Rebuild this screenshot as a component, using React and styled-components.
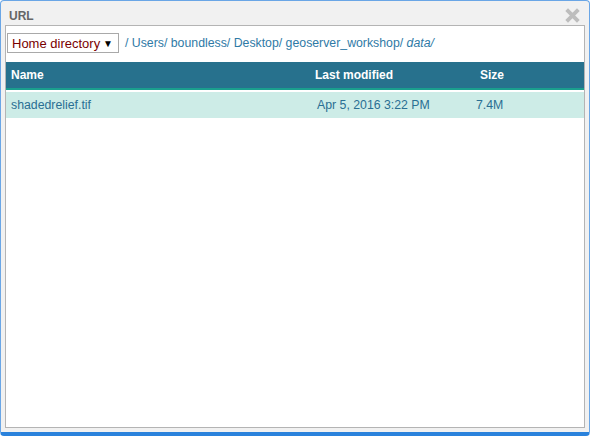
import React from "react";
import styled, { createGlobalStyle } from "styled-components";

const Global = createGlobalStyle`
  html, body { margin: 0; padding: 0; background: #ffffff; }
  body { font-family: "Liberation Sans", Arial, sans-serif; }
`;

const Window = styled.div`
  box-sizing: border-box;
  width: 590px;
  height: 436px;
  background: #f1f1f1;
  border: 1px solid #6aa6e6;
  border-bottom: 4px solid #2a82dc;
  border-radius: 4px;
  padding: 0 4px 4px 4px;
  display: flex;
  flex-direction: column;
`;

const TitleBar = styled.div`
  height: 24px;
  display: flex;
  align-items: center;
  justify-content: space-between;
  padding: 0 4px 0 4px;
`;

const Title = styled.div`
  font-size: 12px;
  font-weight: bold;
  color: #666;
  margin-top: 6px;
`;

const Close = styled.div`
  width: 17px;
  height: 17px;
  margin-top: 4px;
  display: flex;
`;

const Panel = styled.div`
  flex: 1;
  background: #fff;
  border: 1px solid #b4b4b4;
  display: flex;
  flex-direction: column;
`;

const PathBar = styled.div`
  display: flex;
  align-items: center;
  height: 36px;
  padding: 0 1px;
  gap: 6px;
`;

const Select = styled.div`
  box-sizing: border-box;
  height: 20px;
  width: 112px;
  margin-top: -2px;
  border: 1px solid #a9a9a9;
  display: flex;
  align-items: center;
  justify-content: space-between;
  padding: 0 5px 0 4px;
  font-size: 13px;
  color: #7a0000;
  background: #fff;
`;

const Arrow = styled.span`
  color: #000;
  font-size: 10px;
`;

const Crumbs = styled.div`
  font-size: 12.3px;
  color: #2f7aa6;
  margin-top: -2px;
`;

const Current = styled.em`
  font-style: italic;
`;

const Table = styled.div`
  display: flex;
  flex-direction: column;
`;

const Head = styled.div`
  display: grid;
  grid-template-columns: 304px 164px 1fr;
  height: 26px;
  align-items: center;
  background: #27718d;
  border-bottom: 2px solid #1a9f8e;
  color: #fff;
  font-size: 12px;
  font-weight: bold;
`;

const Row = styled.div`
  display: grid;
  grid-template-columns: 306px 159px 1fr;
  height: 26px;
  margin-top: 2px;
  align-items: center;
  background: #cdece7;
  color: #2a6f93;
  font-size: 12.3px;
`;

const Cell = styled.div`
  padding-left: ${(p) => p.$pad || 5}px;
`;

export default function App() {
  return (
    <>
      <Global />
      <Window>
        <TitleBar>
          <Title>URL</Title>
          <Close>
            <svg width="17" height="17" viewBox="0 0 16 16">
              <path d="M2.5 2.5 L13.5 13.5 M13.5 2.5 L2.5 13.5" stroke="#bdbdbd" strokeWidth="3.6" strokeLinecap="butt" />
            </svg>
          </Close>
        </TitleBar>
        <Panel>
          <PathBar>
            <Select>
              <span>Home directory</span>
              <Arrow>▼</Arrow>
            </Select>
            <Crumbs>
              / Users/ boundless/ Desktop/ geoserver_workshop/ <Current>data/</Current>
            </Crumbs>
          </PathBar>
          <Table>
            <Head>
              <Cell>Name</Cell>
              <Cell $pad={5}>Last modified</Cell>
              <Cell $pad={6}>Size</Cell>
            </Head>
            <Row>
              <Cell>shadedrelief.tif</Cell>
              <Cell $pad={5}>Apr 5, 2016 3:22 PM</Cell>
              <Cell $pad={5}>7.4M</Cell>
            </Row>
          </Table>
        </Panel>
      </Window>
    </>
  );
}
